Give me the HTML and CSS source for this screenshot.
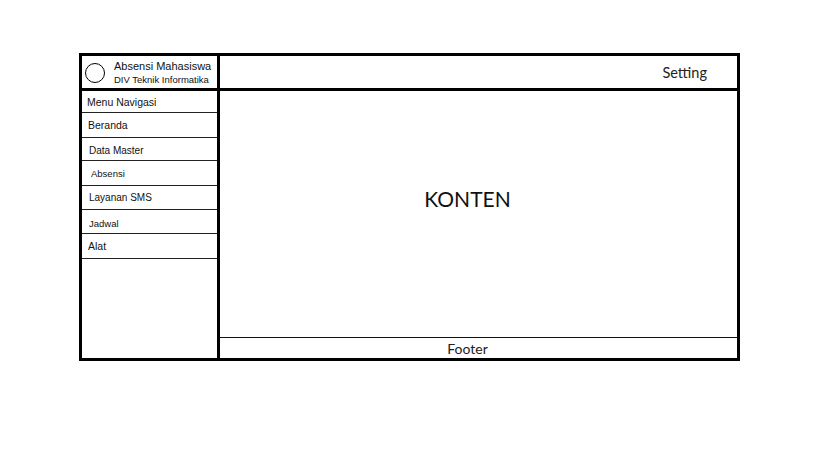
FILE: index.html
```html
<!DOCTYPE html>
<html lang="id">
<head>
<meta charset="utf-8">
<title>Absensi Mahasiswa</title>
<link rel="stylesheet" href="styles.css">
</head>
<body>
<div class="frame">
  <div class="brand">
    <span class="logo"></span>
    <div class="brand-text">
      <div class="brand-title">Absensi Mahasiswa</div>
      <div class="brand-sub">DIV Teknik Informatika</div>
    </div>
  </div>
  <div class="topbar"><span class="setting">Setting</span></div>
  <ul class="menu">
    <li class="item item-head">Menu Navigasi</li>
    <li class="item item-beranda">Beranda</li>
    <li class="item item-data">Data Master</li>
    <li class="item item-absensi">Absensi</li>
    <li class="item item-sms">Layanan SMS</li>
    <li class="item item-jadwal">Jadwal</li>
    <li class="item item-alat">Alat</li>
  </ul>
  <div class="main">
    <div class="content">KONTEN</div>
    <div class="footer">Footer</div>
  </div>
</div>
</body>
</html>
```
FILE: styles.css
```css
html, body {
  margin: 0;
  padding: 0;
  background: #fff;
}
.frame {
  box-sizing: border-box;
  margin: 53px 0 0 79px;
  width: 661px;
  height: 308px;
  border: 3px solid #000;
  display: grid;
  grid-template-columns: 138px 1fr;
  grid-template-rows: 35px 1fr;
}
.brand {
  box-sizing: border-box;
  border-right: 3px solid #000;
  border-bottom: 3px solid #000;
  display: flex;
  align-items: center;
  padding-left: 3px;
  gap: 9px;
  font-family: "Liberation Sans", Arial, sans-serif;
  color: #111;
}
.logo {
  box-sizing: border-box;
  width: 20px;
  height: 20px;
  border: 1px solid #000;
  border-radius: 50%;
  margin-top: 1px;
}
.brand-text {
  display: flex;
  flex-direction: column;
  padding-top: 1px;
}
.brand-title {
  font-size: 11px;
  line-height: 13px;
}
.brand-sub {
  font-size: 9.5px;
  line-height: 13px;
}
.topbar {
  box-sizing: border-box;
  border-bottom: 3px solid #000;
  display: flex;
  align-items: center;
  justify-content: flex-end;
  padding-right: 30px;
}
.setting {
  font-family: Lato, "Open Sans", sans-serif;
  font-size: 14.5px;
  color: #222;
}
.menu {
  box-sizing: border-box;
  border-right: 3px solid #000;
  margin: 0;
  padding: 0;
  list-style: none;
  font-family: "Liberation Sans", Arial, sans-serif;
  font-size: 10.5px;
  color: #111;
}
.item {
  box-sizing: border-box;
  border-bottom: 1px solid #222;
  display: flex;
  align-items: center;
  padding-left: 5px;
}
.item-head { height: 22px; }
.item-beranda { height: 25px; padding-left: 6px; }
.item-data { height: 23px; padding-left: 7px; font-size: 10px; padding-top: 3px; }
.item-absensi { height: 25px; padding-left: 9px; font-size: 9.5px; }
.item-sms { height: 24px; padding-left: 7px; font-size: 10px; }
.item-jadwal { height: 24px; padding-left: 7px; font-size: 9.5px; padding-top: 3px; }
.item-alat { height: 25px; padding-left: 6px; }
.main {
  display: flex;
  flex-direction: column;
}
.content {
  flex: 1;
  box-sizing: border-box;
  padding: 94px 22px 0 0;
  text-align: center;
  font-family: Lato, "Open Sans", sans-serif;
  font-size: 21px;
  line-height: 28px;
  color: #111;
}
.footer {
  box-sizing: border-box;
  height: 21px;
  border-top: 1px solid #111;
  padding-right: 22px;
  display: flex;
  align-items: center;
  justify-content: center;
  font-family: Lato, "Open Sans", sans-serif;
  font-size: 14px;
  color: #222;
}
```
